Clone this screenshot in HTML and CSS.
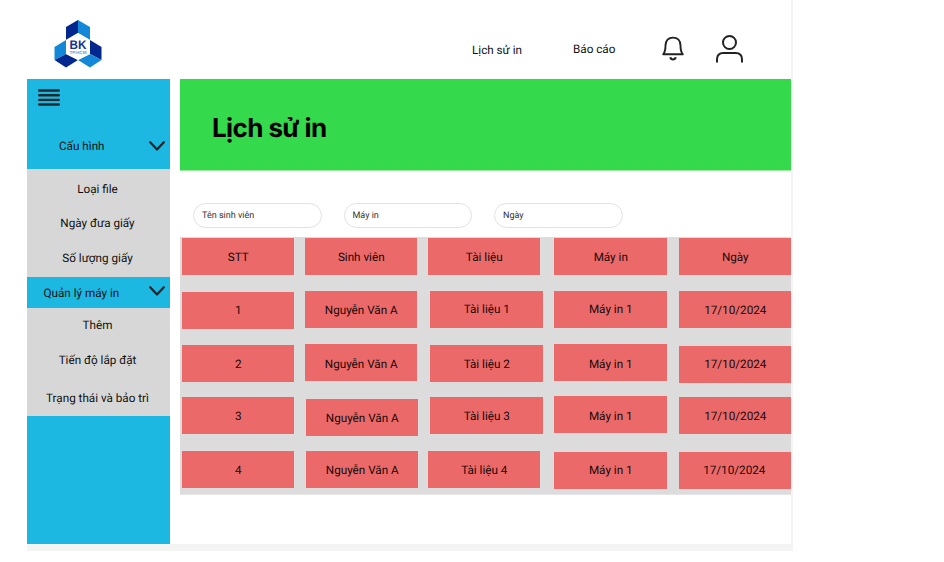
FILE: index.html
```html
<!DOCTYPE html>
<html lang="vi">
<head>
<meta charset="utf-8">
<title>Lịch sử in</title>
<link rel="stylesheet" href="styles.css">
</head>
<body>
<div class="app">
  <header class="topbar">
    <svg class="logo" width="48" height="48" viewBox="0 0 48 48">
      <path fill="#04278f" d="M12 7 24 0v13l-12 7z"/>
      <path fill="#1488d8" d="M24 0l12 7v13l-12-7z"/>
      <path fill="#1488d8" d="M12 20v14L.5 40V27z"/>
      <path fill="#04278f" d="M.5 40 12 34l12 6-12 7.500z"/>
      <path fill="#04278f" d="M36 20l11.500 7v13L36 34z"/>
      <path fill="#1488d8" d="M36 34l11.500 6L36 47.500 24 40z"/>
      <path fill="#fff" d="M24 13l12 7v14l-12 6-12-6V20z"/>
      <text x="24" y="28.500" text-anchor="middle" class="logo-name" textLength="17" lengthAdjust="spacingAndGlyphs">BK</text>
      <text x="24" y="33.800" text-anchor="middle" class="logo-city" textLength="17" lengthAdjust="spacingAndGlyphs">TP.HCM</text>
    </svg>
    <nav class="nav">
      <a class="nav-history">Lịch sử in</a>
      <a class="nav-report">Báo cáo</a>
    </nav>
    <svg class="bell" width="22" height="26" viewBox="0 0 22 26" fill="none" stroke="#222" stroke-width="1.900" stroke-linejoin="round">
      <path d="M1.200 18.300C3.200 16 3.500 13 3.500 9.500C3.500 4.500 6.500 1.600 11 1.600S18.500 4.500 18.500 9.500C18.500 13 18.800 16 20.800 18.300Z"/>
      <path d="M8.300 21.300C9 24.200 13 24.200 13.700 21.300" stroke-width="2.200"/>
    </svg>
    <svg class="user" width="28" height="28" viewBox="0 0 28 28" fill="none" stroke="#222" stroke-width="2">
      <circle cx="13.500" cy="7.500" r="6.500"/>
      <path d="M1 27.500V24.500Q1 18 7.300 18H19.700Q26 18 26 24.500V27.500"/>
    </svg>
  </header>
  <div class="body">
    <aside class="sidebar">
      <div class="group group-config">
        <svg class="burger" width="22" height="17" viewBox="0 0 22 17" stroke="#1d2a30" stroke-width="2.400" stroke-linecap="round">
          <path d="M1.200 1.500H20.800M1.200 6.200H20.800M1.200 10.900H20.800M1.200 15.500H20.800"/>
        </svg>
        <div class="group-title config-title">
          <span>Cấu hình</span>
          <svg class="chevron" width="16" height="10" viewBox="0 0 16 10"><path d="M1.200 1.200 8 8.500 14.800 1.200"/></svg>
        </div>
      </div>
      <ul class="menu menu-config">
        <li>Loại file</li>
        <li>Ngày đưa giấy</li>
        <li>Số lượng giấy</li>
      </ul>
      <div class="group group-title printer-title">
        <span>Quản lý máy in</span>
        <svg class="chevron" width="16" height="10" viewBox="0 0 16 10"><path d="M1.200 1.200 8 8.500 14.800 1.200"/></svg>
      </div>
      <ul class="menu menu-printer">
        <li>Thêm</li>
        <li>Tiến độ lắp đặt</li>
        <li>Trạng thái và bảo trì</li>
      </ul>
    </aside>
    <main class="main">
      <h1 class="title">Lịch sử in</h1>
      <div class="filters">
        <div class="filter">Tên sinh viên</div>
        <div class="filter">Máy in</div>
        <div class="filter">Ngày</div>
      </div>
      <div class="table">
        <div class="cell">STT</div>
        <div class="cell">Sinh viên</div>
        <div class="cell">Tài liệu</div>
        <div class="cell">Máy in</div>
        <div class="cell">Ngày</div>

        <div class="cell down-2 high">1</div>
        <div class="cell">Nguyễn Văn A</div>
        <div class="cell right-2 high">Tài liệu 1</div>
        <div class="cell high">Máy in 1</div>
        <div class="cell">17/10/2024</div>

        <div class="cell down-1">2</div>
        <div class="cell low">Nguyễn Văn A</div>
        <div class="cell right-2 down-1">Tài liệu 2</div>
        <div class="cell low">Máy in 1</div>
        <div class="cell down-2 high">17/10/2024</div>

        <div class="cell down-1">3</div>
        <div class="cell right-1 down-3">Nguyễn Văn A</div>
        <div class="cell right-2 down-1">Tài liệu 3</div>
        <div class="cell low">Máy in 1</div>
        <div class="cell down-1">17/10/2024</div>

        <div class="cell">4</div>
        <div class="cell right-1">Nguyễn Văn A</div>
        <div class="cell">Tài liệu 4</div>
        <div class="cell down-1 high">Máy in 1</div>
        <div class="cell down-2 high back">17/10/2024</div>
      </div>
    </main>
  </div>
</div>
</body>
</html>
```
FILE: styles.css
```css
* { box-sizing: border-box; }
body {
  margin: 0;
  background: #fff;
  font: 11.700px/16px Roboto, "Liberation Sans", sans-serif;
  color: #111;
  text-rendering: geometricPrecision;
}
.app {
  width: 766px;
  height: 551px;
  margin-left: 27px;
  border-right: 2px solid #f4f4f4;
  border-bottom: 7px solid #f4f4f4;
  overflow: hidden;
}
.topbar { display: flex; height: 79px; }
.logo { margin: 20px 0 0 27px; }
.logo-name { font: 700 12.500px "Liberation Sans", sans-serif; fill: #14338f; }
.logo-city { font: 700 4.500px "Liberation Sans", sans-serif; fill: #55a5df; }
.nav { display: flex; width: 190px; margin-left: 370px; white-space: nowrap; }
.nav-history { width: 101px; padding-top: 42px; }
.nav-report { padding-top: 41px; }
.bell { margin: 36px 0 0; }
.user { margin: 35px 0 0 32px; }
.body { display: flex; height: 466px; }
.sidebar { width: 143px; flex: none; background: #1cb8e2; }
.group-config { height: 90px; padding: 10px 0 0 11px; }
.burger { display: block; }
.group-title { display: flex; align-items: center; justify-content: space-between; padding-right: 5px; }
.config-title { margin-top: 32px; padding-left: 21px; }
.printer-title { height: 31px; padding: 1px 5px 0 16.500px; }
.chevron { fill: none; stroke: #1b2429; stroke-width: 2.200; stroke-linecap: round; stroke-linejoin: round; }
.printer-title .chevron { margin-bottom: 5px; }
.menu { display: grid; margin: 0; padding: 0 2px 0 0; list-style: none; text-align: center; background: #d7d7d7; }
.menu li { display: grid; place-items: center; white-space: nowrap; }
.menu-config { height: 108px; grid-template-rows: 36px 31px 39px; padding-top: 2px; }
.menu-printer { height: 108px; grid-template-rows: 32px 38px 38px; padding-top: 1px; }
.main { width: 611px; margin-left: 10px; flex: none; }
.title {
  height: 92px;
  margin: 0;
  padding: 34px 0 0 32px;
  border-bottom: 1px solid #9cea9f;
  background: #34d94c;
  color: #000;
  font: 700 26px/32px Inter, sans-serif;
  letter-spacing: -.6px;
}
.filters { display: flex; gap: 22px; height: 66px; padding: 32px 0 0 13px; }
.filter {
  width: 128.500px;
  height: 25px;
  padding: 1px 0 0 8px;
  border: 1px solid #e2e2e2;
  border-radius: 13px;
  font-size: 9px;
  line-height: 23px;
  color: #333;
}
.table {
  display: grid;
  grid-template-columns: 123px 123px 126.500px 124.500px 113px;
  grid-template-rows: 52.500px 53.500px 52px 54.500px 37px;
  height: 258px;
  padding: 1px 0 0 1.500px;
  border-bottom: 1px solid #e6e6e6;
  background: #dcdcdc;
  overflow: hidden;
}
.cell {
  width: 112.500px;
  height: 37px;
  padding: 11px 0 0 1px;
  background: #ec6969;
  color: #160a0a;
  text-align: center;
}
.low { padding-top: 12px; }
.high { padding-top: 10px; }
.back { padding-left: 0; padding-right: 1px; }
.down-1 { margin-top: 1px; }
.down-2 { margin-top: 1.500px; }
.down-3 { margin-top: 3px; }
.right-1 { margin-left: 1px; }
.right-2 { margin-left: 2.500px; }
```
